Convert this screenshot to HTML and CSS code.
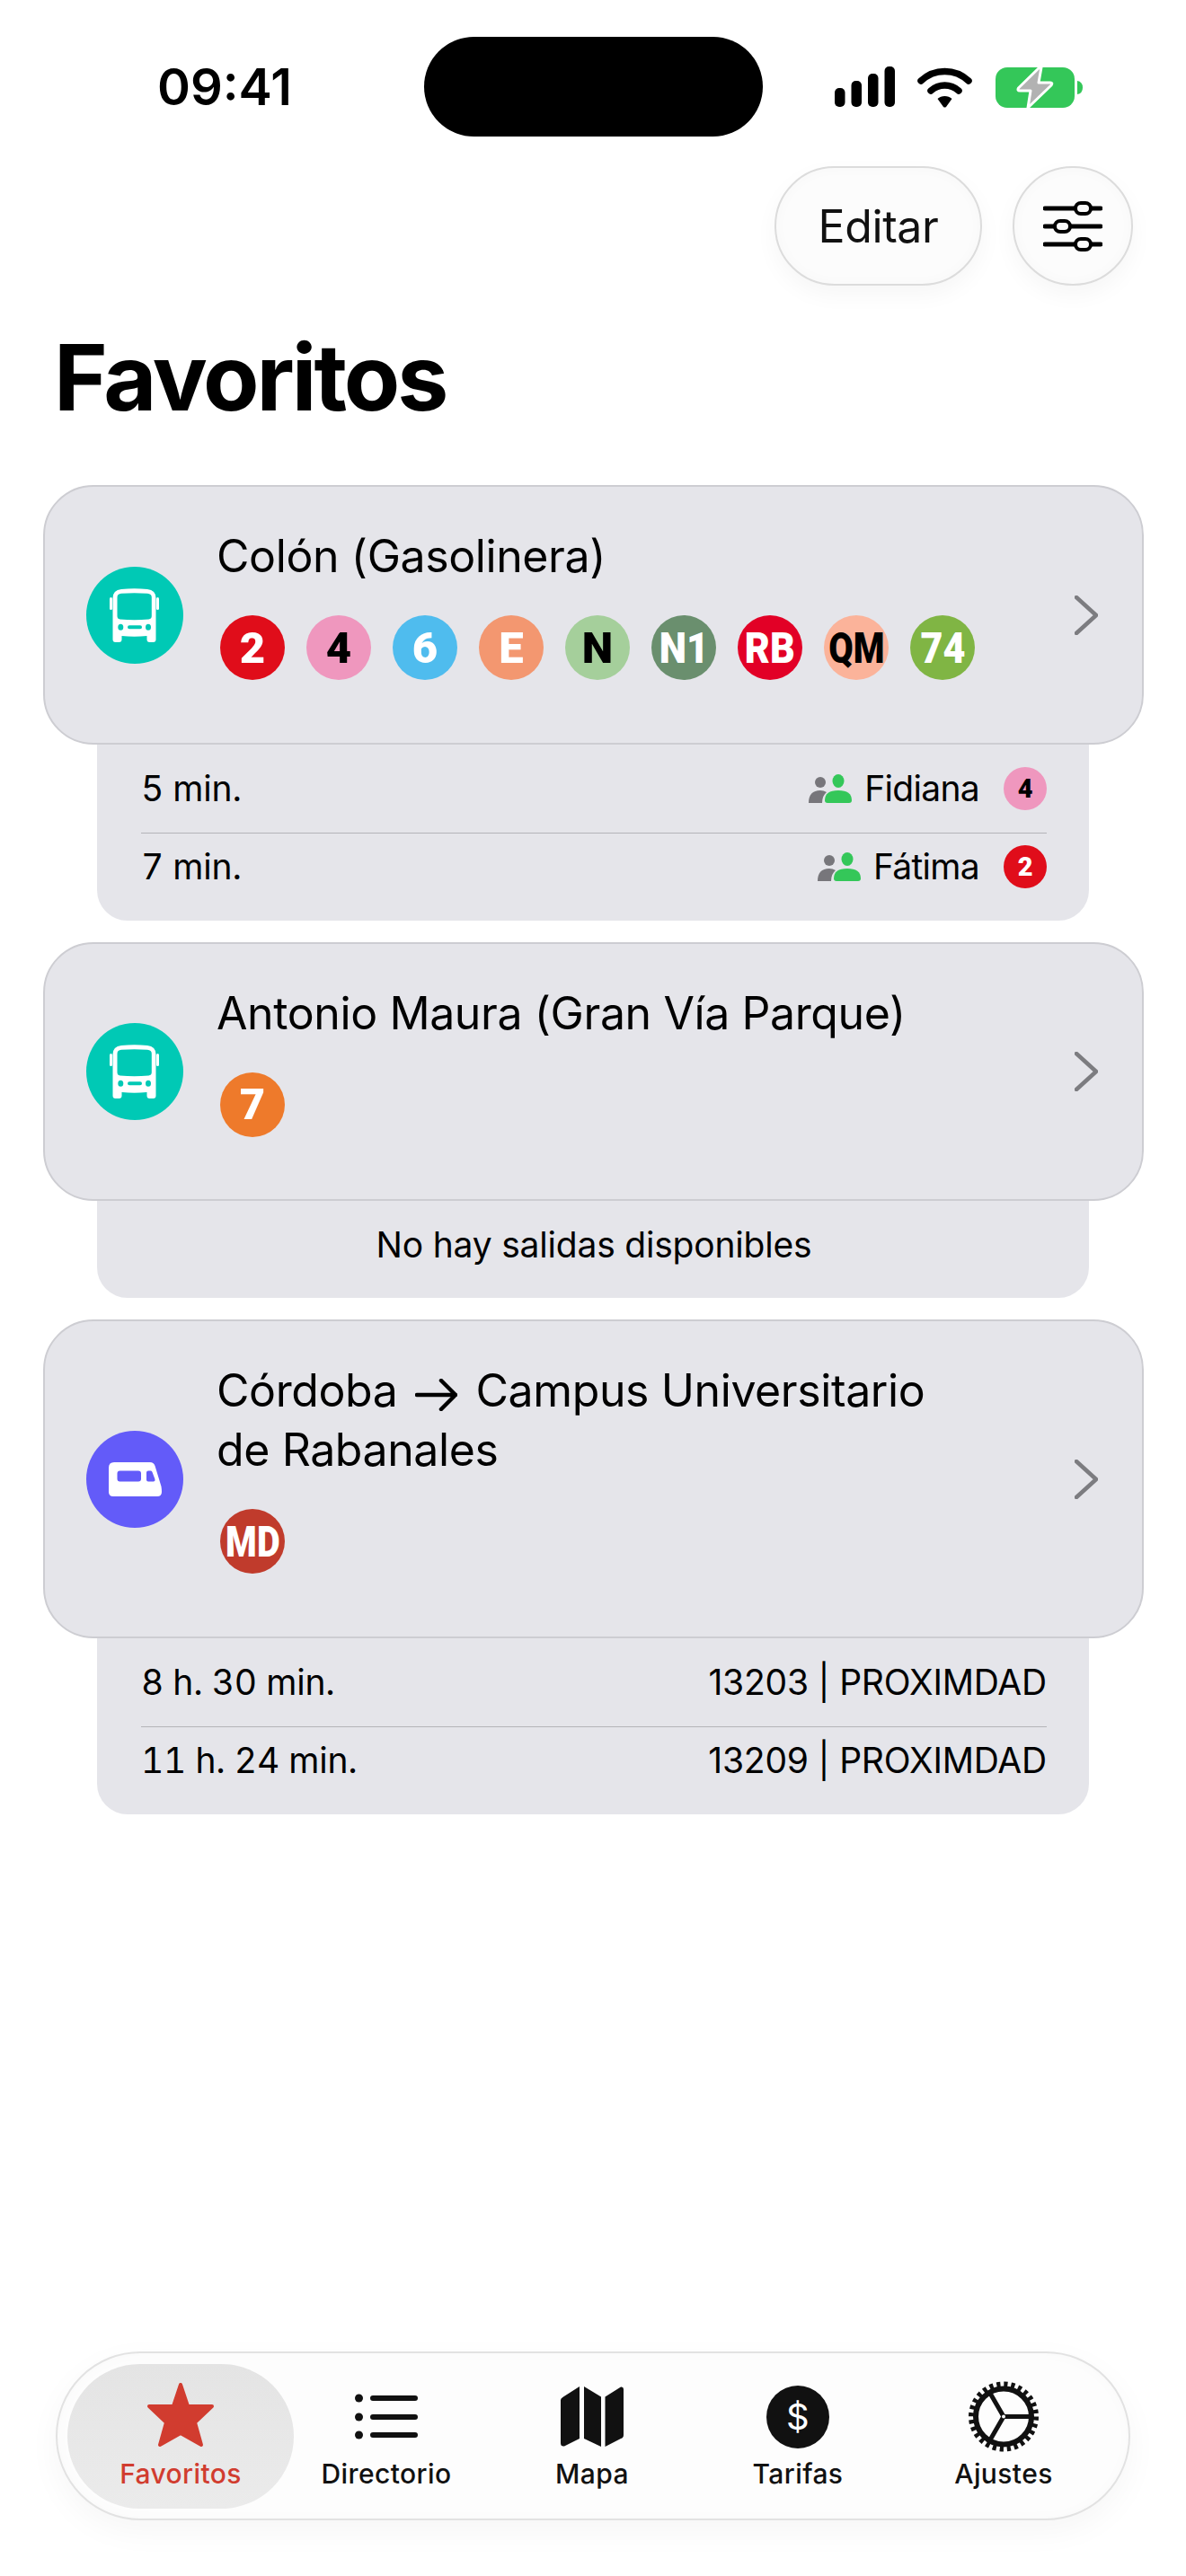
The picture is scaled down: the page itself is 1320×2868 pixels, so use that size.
FILE: index.html
```html
<!DOCTYPE html>
<html lang="es">
<head>
  <meta charset="UTF-8" />
  <meta name="viewport" content="width=device-width, initial-scale=1.0"/>
  <title>Favoritos</title>
  <link rel="stylesheet" href="styles.css">
</head>
<body>
  <div class="screen">
    <div class="status-bar">
      <span class="time">09:41</span>
      <div class="island"></div>
      <div class="status-icons">
        <svg class="signal" width="67" height="45" viewBox="0 0 67 45">
          <rect x="0" y="24" width="11.500" height="21" rx="5"/>
          <rect x="18.500" y="16" width="11.500" height="29" rx="5"/>
          <rect x="37" y="8" width="11.500" height="37" rx="5"/>
          <rect x="55.500" y="0" width="11.500" height="45" rx="5"/>
        </svg>
        <svg class="wifi" width="61" height="46" viewBox="0 0 61 46">
          <path d="M4 16 C19 2 42 2 57 16" fill="none" stroke="#000" stroke-width="7.500" stroke-linecap="round"/>
          <path d="M15 27 C24 19 37 19 46 27" fill="none" stroke="#000" stroke-width="7.500" stroke-linecap="round"/>
          <path d="M22.500 36 C26.500 32 34.500 32 38.500 36 L32 45 Q30.500 46 29 45 Z"/>
        </svg>
        <svg class="battery" width="97" height="50" viewBox="0 0 97 50">
          <rect x="0" y="3" width="88" height="45" rx="13" fill="#34c759"/>
          <path d="M91 18 Q97 19 97 25.500 Q97 32 91 33 Z" fill="#34c759"/>
          <path d="M50 2 L25.500 26 Q24 29 27 29 H39 L36 48 L62 23 Q64 20 61 20 H48 L51 3 Z" fill="#b2b2b2" stroke="#fff" stroke-width="3" stroke-linejoin="round"/>
        </svg>
      </div>
    </div>

    <div class="top-actions">
      <button class="glass-btn edit-btn">Editar</button>
      <button class="glass-btn filter-btn">
        <svg width="66" height="56" viewBox="0 0 66 56" fill="none" stroke="#000" stroke-width="5" stroke-linecap="round">
          <path d="M2 8 H64 M2 28 H64 M2 48 H64"/>
          <rect x="36" y="2" width="17" height="12" rx="6" fill="#fafafa" stroke-width="4"/>
          <rect x="13" y="22" width="17" height="12" rx="6" fill="#fafafa" stroke-width="4"/>
          <rect x="36" y="42" width="17" height="12" rx="6" fill="#fafafa" stroke-width="4"/>
        </svg>
      </button>
    </div>

    <h1 class="page-title">Favoritos</h1>

    <div class="favorites">
      <!-- Colón -->
      <div class="favorite">
        <div class="card">
          <div class="type-icon bus">
            <svg width="56" height="60" viewBox="0 0 56 60"><use href="#bus-shape"/></svg>
          </div>
          <div class="card-body">
            <div class="stop-name">Colón (Gasolinera)</div>
            <div class="lines">
              <span class="line l-2">2</span>
              <span class="line l-4">4</span>
              <span class="line l-6">6</span>
              <span class="line l-e">E</span>
              <span class="line l-n">N</span>
              <span class="line l-n1"><span class="squeeze">N1</span></span>
              <span class="line l-rb"><span class="squeeze">RB</span></span>
              <span class="line l-qm"><span class="squeeze-more">QM</span></span>
              <span class="line l-74"><span class="squeeze">74</span></span>
            </div>
          </div>
          <svg class="chevron" width="26" height="44" viewBox="0 0 26 44"><path d="M2 2 L24 22 L2 42"/></svg>
        </div>
        <div class="departures">
          <div class="row">
            <span class="wait">5 min.</span>
            <div class="row-end">
              <svg class="people" width="48" height="32" viewBox="0 0 48 32"><use href="#people-shape"/></svg>
              <span class="driver">Fidiana</span>
              <span class="line mini l-4">4</span>
            </div>
          </div>
          <div class="row">
            <span class="wait">7 min.</span>
            <div class="row-end">
              <svg class="people" width="48" height="32" viewBox="0 0 48 32"><use href="#people-shape"/></svg>
              <span class="driver">Fátima</span>
              <span class="line mini l-2">2</span>
            </div>
          </div>
        </div>
      </div>

      <!-- Antonio Maura -->
      <div class="favorite">
        <div class="card">
          <div class="type-icon bus">
            <svg width="56" height="60" viewBox="0 0 56 60"><use href="#bus-shape"/></svg>
          </div>
          <div class="card-body">
            <div class="stop-name">Antonio Maura (Gran Vía Parque)</div>
            <div class="lines">
              <span class="line l-7">7</span>
            </div>
          </div>
          <svg class="chevron" width="26" height="44" viewBox="0 0 26 44"><path d="M2 2 L24 22 L2 42"/></svg>
        </div>
        <div class="departures">
          <div class="row row-center">No hay salidas disponibles</div>
        </div>
      </div>

      <!-- Renfe -->
      <div class="favorite">
        <div class="card">
          <div class="type-icon train">
            <svg width="59" height="38" viewBox="0 0 59 38">
              <path fill="#fff" fill-rule="evenodd" d="M6 0 H46 Q50 0 51.500 4 L58.500 27 Q59 30 59 33 Q59 38 54 38 H5 Q0 38 0 33 V6 Q0 0 6 0 Z M12.500 9.400 Q9.500 9.400 9.500 12.400 V18.400 Q9.500 21.400 12.500 21.400 H33 Q36 21.400 36 18.400 V12.400 Q36 9.400 33 9.400 Z M44 9.400 Q42 9.400 42 11.400 V19.400 Q42 21.400 44 21.400 H50 Q52 21.400 51.500 19 L48.500 11 Q48 9.400 47 9.400 Z"/>
            </svg>
          </div>
          <div class="card-body">
            <div class="stop-name">Córdoba<svg class="arrow" width="47" height="36" viewBox="0 0 47 36"><path d="M2 18 H45 M29 2 L45 18 L29 34"/></svg>Campus Universitario<br>de Rabanales</div>
            <div class="lines">
              <span class="line l-md"><span class="squeeze-more">MD</span></span>
            </div>
          </div>
          <svg class="chevron" width="26" height="44" viewBox="0 0 26 44"><path d="M2 2 L24 22 L2 42"/></svg>
        </div>
        <div class="departures">
          <div class="row">
            <span class="wait">8 h. 30 min.</span>
            <span>13203 | PROXIMDAD</span>
          </div>
          <div class="row">
            <span class="wait">11 h. 24 min.</span>
            <span>13209 | PROXIMDAD</span>
          </div>
        </div>
      </div>
    </div>

    <nav class="tab-bar">
      <div class="tab active">
        <svg width="76" height="80" viewBox="0 0 76 80">
          <path d="M38 4 L46 28 H73 L54 46 L61 71 L38 58 L15 71 L22 46 L3 28 H30 Z" fill="#d13c2f" stroke="#d13c2f" stroke-width="4" stroke-linejoin="round"/>
        </svg>
        <span>Favoritos</span>
      </div>
      <div class="tab">
        <svg width="70" height="80" viewBox="0 0 70 80">
          <circle cx="4.500" cy="19" r="4.500" fill="#111"/>
          <circle cx="4.500" cy="40" r="4.500" fill="#111"/>
          <circle cx="4.500" cy="60" r="4.500" fill="#111"/>
          <path d="M20 19 H67 M20 40 H67 M20 60 H67" stroke="#111" stroke-width="6" stroke-linecap="round"/>
        </svg>
        <span>Directorio</span>
      </div>
      <div class="tab">
        <svg width="70" height="80" viewBox="0 0 70 80">
          <g transform="translate(0 6)" fill="#111">
            <path d="M3 11.500 L21 0 V58 L4 66.500 Q0 67 0 63 V15 Q0 13 3 11.500 Z"/>
            <path d="M26 0 L45 11.500 V67 L26 58 Z"/>
            <path d="M49.500 11.500 L67 0.500 Q70 0 70 3 V54 Q70 57 67 58 L49.500 67 Z"/>
          </g>
        </svg>
        <span>Mapa</span>
      </div>
      <div class="tab">
        <div class="coin">$</div>
        <span>Tarifas</span>
      </div>
      <div class="tab">
        <svg width="80" height="80" viewBox="0 0 80 80" fill="none" stroke="#111">
          <circle cx="40" cy="39.500" r="36" stroke-width="6" stroke-dasharray="4.200 3.880"/>
          <circle cx="40" cy="39.500" r="31" stroke-width="6"/>
          <path d="M40 39.500 H70 M40 39.500 L25 13.500 M40 39.500 L25 65.500" stroke-width="5"/>
          <circle cx="40" cy="39.500" r="2" fill="#fff" stroke="none"/>
        </svg>
        <span>Ajustes</span>
      </div>
    </nav>
  </div>

  <svg class="defs" width="0" height="0">
    <defs>
      <g id="bus-shape">
        <path fill="#fff" fill-rule="evenodd" d="M3.500 11 Q3.500 2 13 1 Q27.500 -0.500 42 1 Q51.500 2 51.500 11 V53 H51.500 V57 Q51.500 60 48.500 60 H44.500 Q41.500 60 41.500 57 V53 Q27.500 54.500 13.500 53 V57 Q13.500 60 10.500 60 H6.500 Q3.500 60 3.500 57 Z M13 5.700 Q8.500 6 8.500 10 V31 Q8.500 34 11.500 34.500 Q27.500 36 43.500 34.500 Q46.800 34 46.800 31 V10 Q46.800 6 42 5.700 Q27.500 4.800 13 5.700 Z M12.300 39.800 A3 3.500 0 1 0 12.300 46.800 A3 3.500 0 1 0 12.300 39.800 Z M43 39.800 A3 3.500 0 1 0 43 46.800 A3 3.500 0 1 0 43 39.800 Z M22 41.300 Q20 41.300 20 43.300 Q20 45.300 22 45.300 H34 Q36 45.300 36 43.300 Q36 41.300 34 41.300 Z"/>
        <rect x="0" y="10" width="3" height="14" rx="1.500" fill="#fff"/>
        <rect x="52" y="10" width="3" height="14" rx="1.500" fill="#fff"/>
      </g>
      <g id="people-shape">
        <circle cx="13" cy="9" r="6" fill="#77767b"/>
        <path d="M0 32 Q0 18 13 18 Q17 18 20 20 Q15 24 15 32 Z" fill="#77767b"/>
        <ellipse cx="33" cy="7.500" rx="6.500" ry="7.500" fill="#34c759"/>
        <path d="M18 29 Q18 18 33 18 Q48 18 48 29 Q48 32 45 32 H21 Q18 32 18 29 Z" fill="#34c759"/>
      </g>
    </defs>
  </svg>
</body>
</html>
```

FILE: styles.css
```css
* {
  box-sizing: border-box;
}

body {
  margin: 0;
  background: #fff;
  color: #000;
  font-family: Inter, "Noto Sans", sans-serif;
}

.screen {
  width: 1320px;
  height: 2868px;
  display: flex;
  flex-direction: column;
  overflow: hidden;
}

.defs {
  position: absolute;
}

/* status bar */
.status-bar {
  display: flex;
  align-items: center;
  margin-top: 41px;
  padding-left: 175px;
  height: 111px;
}

.time {
  width: 297px;
  font-size: 56px;
  font-weight: 600;
}

.island {
  width: 377px;
  height: 111px;
  background: #000;
  border-radius: 56px;
}

.status-icons {
  display: flex;
  align-items: center;
  margin-left: 80px;
}

.wifi {
  margin-left: 25px;
}

.battery {
  margin-left: 26px;
  margin-top: 1px;
}

/* top buttons */
.top-actions {
  display: flex;
  justify-content: flex-end;
  gap: 34px;
  margin-top: 33px;
  padding-right: 59px;
}

.glass-btn {
  height: 133px;
  border: 2px solid #dcdcdc;
  border-radius: 67px;
  background: #fcfcfc;
  box-shadow: 0 10px 26px rgba(0,0,0,0.04), inset 0 0 16px rgba(0,0,0,0.025);
  font-family: inherit;
  color: #111;
  padding: 0;
  display: flex;
  align-items: center;
  justify-content: center;
}

.edit-btn {
  width: 231px;
  font-size: 50px;
  letter-spacing: -0.4px;
}

.filter-btn {
  width: 134px;
}

.page-title {
  margin: 42px 0 60px;
  padding-left: 60px;
  font-size: 102px;
  line-height: 120px;
  font-weight: 700;
  letter-spacing: -3px;
}

/* favourites */
.favorites {
  display: flex;
  flex-direction: column;
  gap: 24px;
  padding: 0 47px 0 48px;
}

.card {
  display: flex;
  align-items: center;
  background: #e5e5ea;
  border: 2px solid #cdcdd2;
  border-radius: 56px;
  padding: 44px 49px 69.5px 46px;
}

.type-icon {
  width: 108px;
  height: 108px;
  border-radius: 50%;
  display: flex;
  align-items: center;
  justify-content: center;
  flex-shrink: 0;
  position: relative;
  top: 13px;
}

.type-icon.bus {
  background: #00c9b5;
}

.type-icon.train {
  background: #635bf9;
}

.card-body {
  flex: 1;
  margin-left: 37px;
}

.stop-name {
  font-size: 50px;
  line-height: 66px;
  letter-spacing: -0.4px;
}

.arrow {
  margin: 0 20px;
  vertical-align: -5px;
  fill: none;
  stroke: #000;
  stroke-width: 4.5;
  stroke-linecap: round;
  stroke-linejoin: round;
}

.lines {
  display: flex;
  gap: 24px;
  margin: 33px 0 0 4px;
}

.line {
  width: 72px;
  height: 72px;
  border-radius: 50%;
  display: flex;
  align-items: center;
  justify-content: center;
  flex-shrink: 0;
  color: #fff;
  font-family: Roboto, "Liberation Sans", sans-serif;
  font-weight: 900;
  font-size: 49px;
}

.line.mini {
  width: 48px;
  height: 48px;
  font-size: 29px;
}

.squeeze {
  display: inline-block;
  transform: scaleX(0.88);
}

.squeeze-more {
  display: inline-block;
  transform: scaleX(0.81);
}

.l-2 { background: #e00d1a; }
.l-4 { background: #ef97be; color: #000; }
.l-6 { background: #4fbcee; }
.l-e { background: #f39770; }
.l-n { background: #a5cf9b; color: #000; }
.l-n1 { background: #6a8f6e; }
.l-rb { background: #e20026; }
.l-qm { background: #fbb39a; color: #000; }
.l-74 { background: #80b544; }
.l-7 { background: #ee7a2b; }
.l-md { background: #c03b2c; }

.chevron {
  fill: none;
  stroke: #7c7c80;
  stroke-width: 4.5;
  stroke-linecap: round;
  stroke-linejoin: round;
  position: relative;
  top: 13px;
  flex-shrink: 0;
}

.departures {
  margin: 0 61px 0 60px;
  padding: 25px 47px 36px 49px;
  background: #e5e5ea;
  border-radius: 0 0 34px 34px;
  font-size: 39px;
  letter-spacing: -0.2px;
}

.wait {
  font-variant-numeric: tabular-nums;
}

.row {
  display: flex;
  align-items: center;
  justify-content: space-between;
  min-height: 48px;
}

.row + .row {
  margin-top: 25px;
  padding-top: 13px;
  border-top: 1px solid #b4b4b8;
  min-height: 62px;
}

.row-center {
  justify-content: center;
  min-height: 47px;
}

.row-end {
  display: flex;
  align-items: center;
}

.driver {
  margin-left: 14px;
  margin-right: 27px;
  letter-spacing: -0.7px;
}

/* tab bar */
.tab-bar {
  margin: auto 62px 62px;
  height: 188px;
  padding: 12px 0 0 11px;
  display: flex;
  border: 2px solid #e2e2e2;
  border-radius: 94px;
  background: #fdfdfd;
  box-shadow: 0 12px 36px rgba(0,0,0,0.04), inset 0 0 18px rgba(0,0,0,0.02);
}

.tab {
  width: 229px;
  height: 161px;
  display: flex;
  flex-direction: column;
  align-items: center;
  padding-top: 19px;
  font-size: 30px;
  font-weight: 500;
  line-height: 38px;
  letter-spacing: 0.4px;
  color: #111;
}

.tab svg {
  margin-bottom: 4px;
}

.tab.active {
  width: 252px;
  margin-right: -11.5px;
  background: linear-gradient(#e4e4e4, #ebebeb);
  border-radius: 81px;
  color: #d13c2f;
}

.coin {
  width: 70px;
  height: 70px;
  margin: 5px 0 9px;
  border-radius: 50%;
  background: #111;
  color: #fff;
  font-size: 40px;
  font-weight: 400;
  display: flex;
  align-items: center;
  justify-content: center;
}
```
